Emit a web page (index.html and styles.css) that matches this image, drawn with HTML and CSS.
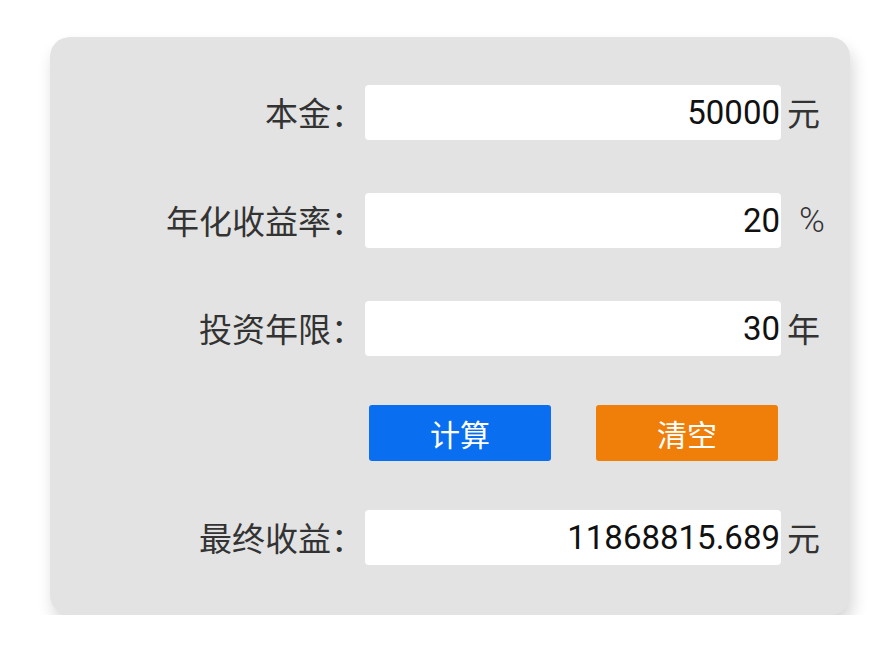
FILE: index.html
```html
<!DOCTYPE html>
<html lang="zh-CN">
<head>
<meta charset="utf-8">
<title>收益计算</title>
<link rel="stylesheet" href="styles.css">
</head>
<body>
<div class="card">
  <div class="row">
    <label class="label">本金：</label>
    <div class="field">50000</div>
    <span class="unit">元</span>
  </div>
  <div class="row">
    <label class="label">年化收益率：</label>
    <div class="field">20</div>
    <span class="unit unit-pct">%</span>
  </div>
  <div class="row">
    <label class="label">投资年限：</label>
    <div class="field">30</div>
    <span class="unit">年</span>
  </div>
  <div class="row row-buttons">
    <span class="label"></span>
    <div class="buttons">
      <button class="btn btn-calc">计算</button>
      <button class="btn btn-clear">清空</button>
    </div>
    <span class="unit"></span>
  </div>
  <div class="row">
    <label class="label">最终收益：</label>
    <div class="field">11868815.689</div>
    <span class="unit">元</span>
  </div>
</div>
</body>
</html>
```
FILE: styles.css
```css
html, body {
  margin: 0;
  padding: 0;
  background: #ffffff;
}
body {
  padding: 37px 0 0 50px;
  font-family: "Noto Sans CJK SC", "Noto Sans", sans-serif;
}
.card {
  width: 800px;
  height: 578px;
  box-sizing: border-box;
  background: #e3e3e3;
  border-radius: 20px;
  box-shadow: 3px 10px 16px rgba(0, 0, 0, 0.16);
  padding-top: 48px;
  display: flex;
  flex-direction: column;
  gap: 53px;
}
.row {
  display: grid;
  grid-template-columns: 315px 416px 69px;
  align-items: center;
  height: 55px;
}
.label {
  text-align: right;
  font-size: 33px;
  color: #333333;
  margin-right: 1px;
  line-height: 55px;
  white-space: nowrap;
}
.field {
  background: #ffffff;
  height: 55px;
  border-radius: 4px;
  text-align: right;
  font-family: Roboto, "Noto Sans", sans-serif;
  font-size: 33px;
  line-height: 55px;
  color: #111111;
  padding-right: 1px;
  box-sizing: border-box;
}
.unit {
  font-size: 33px;
  line-height: 55px;
  color: #333333;
  padding-left: 6px;
}
.unit-pct {
  font-family: Roboto, sans-serif;
  font-size: 35px;
  font-weight: 300;
  padding-left: 18px;
}
.row-buttons {
  height: 56px;
  margin: -4px 0 -4px;
}
.buttons {
  display: flex;
  justify-content: space-between;
  padding: 0 3px 0 4px;
}
.btn {
  width: 182px;
  height: 56px;
  border: none;
  border-radius: 3px;
  color: #ffffff;
  font-family: "Noto Sans CJK SC", sans-serif;
  font-size: 30px;
  padding: 0;
}
.btn-calc {
  background: #0a6ef0;
}
.btn-clear {
  background: #f07f0a;
}
```
